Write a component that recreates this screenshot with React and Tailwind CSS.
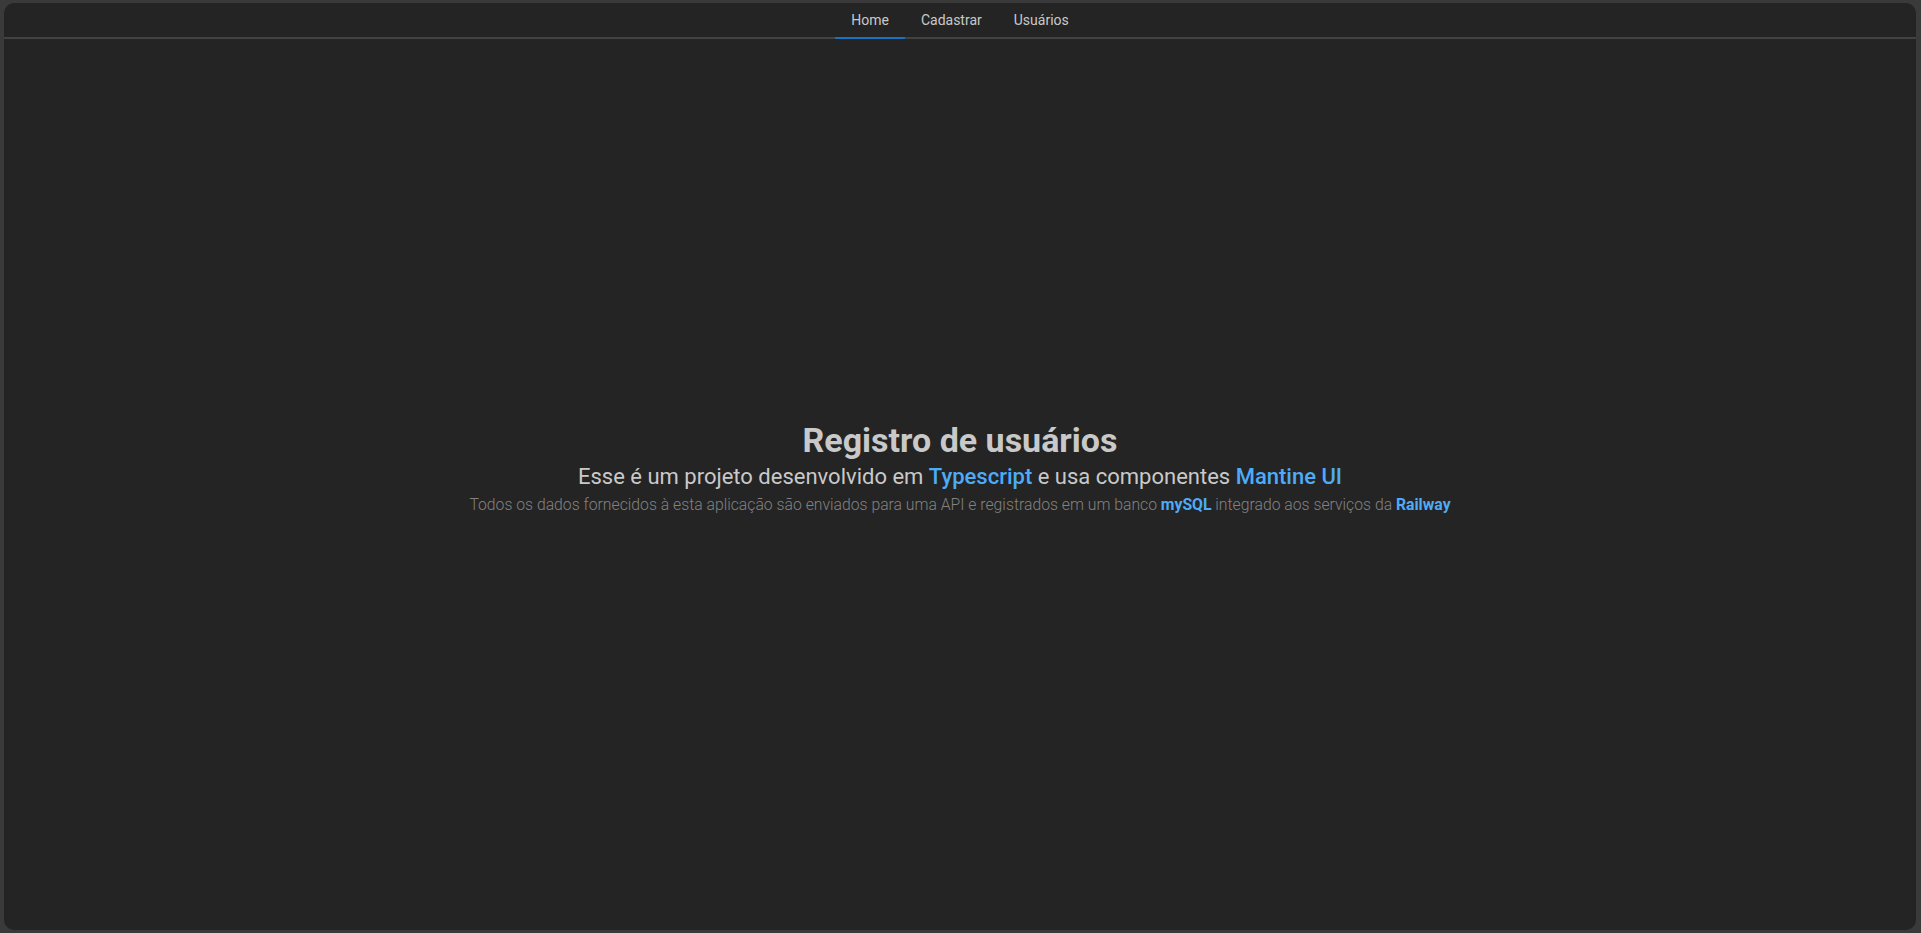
export default function App() {
  const tabs = ["Home", "Cadastrar", "Usuários"];
  return (
    <div
      className="h-[933px] w-full bg-[#3a3a3a] pt-[3px] pb-[3px] pl-[4px] pr-[5px] overflow-hidden"
      style={{ fontFamily: "Roboto, 'Noto Sans', sans-serif" }}
    >
      <div className="h-full w-full rounded-[10px] bg-[#242424] flex flex-col">
        <div className="flex justify-center border-b-2 border-[#424242]">
          {tabs.map((t, i) => (
            <div
              key={t}
              className={
                "px-4 h-[36px] pt-[1px] flex items-center text-[14px] text-[#c9c9c9] -mb-[2px] border-b-2 " +
                (i === 0 ? "border-[#1971c2]" : "border-transparent")
              }
            >
              {t}
            </div>
          ))}
        </div>
        <div className="flex-1 flex flex-col items-center justify-center pb-[34px]">
          <h1 className="text-[34px] leading-none font-bold text-[#c9c9c9]">
            Registro de usuários
          </h1>
          <p className="mt-[9px] text-[22px] leading-none text-[#c9c9c9]">
            Esse é um projeto desenvolvido em{" "}
            <span className="font-medium text-[#4dabf7]">Typescript</span> e usa componentes{" "}
            <span className="font-medium text-[#4dabf7]">Mantine UI</span>
          </p>
          <p className="mt-[9px] text-[15.75px] leading-none font-light text-[#828282]">
            Todos os dados fornecidos à esta aplicação são enviados para uma API e registrados em um banco{" "}
            <span className="font-bold text-[#4dabf7]">mySQL</span> integrado aos serviços da{" "}
            <span className="font-bold text-[#4dabf7]">Railway</span>
          </p>
        </div>
      </div>
    </div>
  );
}
